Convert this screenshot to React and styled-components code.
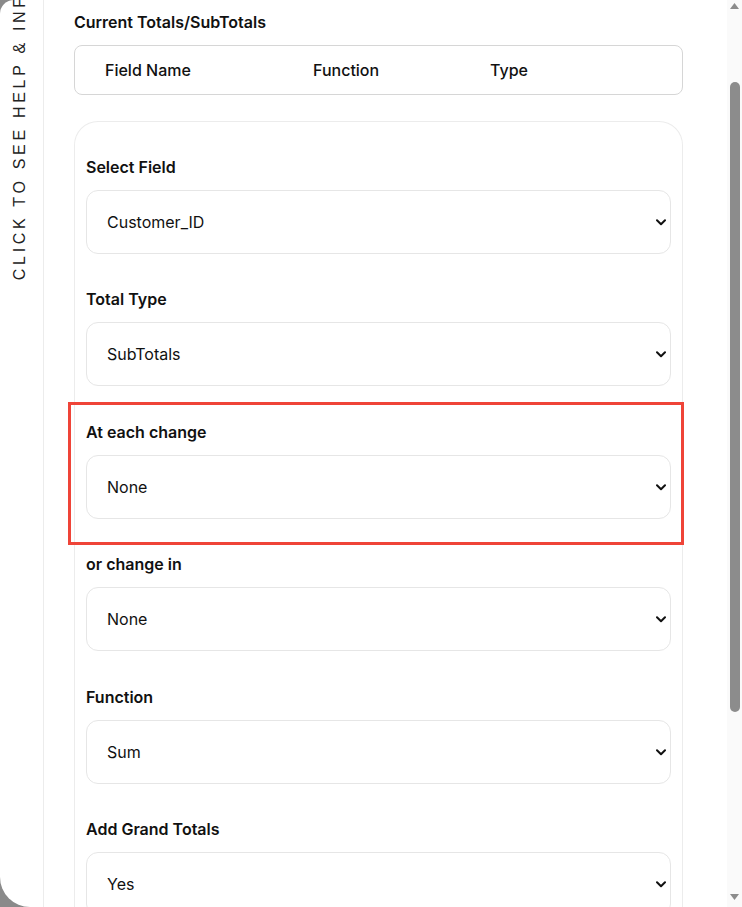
import React from 'react';
import styled, { createGlobalStyle } from 'styled-components';

const GlobalStyle = createGlobalStyle`
  html, body {
    margin: 0;
    padding: 0;
    height: 100%;
    background: #8a8a8a;
    overflow: hidden;
  }
  body {
    font-family: Inter, "Noto Sans", "Liberation Sans", sans-serif;
    color: #111;
  }
`;

const fields = [
  { label: 'Select Field', value: 'Customer_ID', options: ['Customer_ID', 'Order_ID', 'Amount'] },
  { label: 'Total Type', value: 'SubTotals', options: ['SubTotals', 'Totals'] },
  { label: 'At each change', value: 'None', options: ['None', 'Customer_ID'], highlighted: true },
  { label: 'or change in', value: 'None', options: ['None', 'Customer_ID'] },
  { label: 'Function', value: 'Sum', options: ['Sum', 'Count', 'Average'] },
  { label: 'Add Grand Totals', value: 'Yes', options: ['Yes', 'No'] },
];

const Frame = styled.div`
  display: flex;
  height: 907px;
  background: #fff;
  border-top-left-radius: 14px;
  border-bottom-left-radius: 30px;
  overflow: hidden;
`;

const HelpTab = styled.div`
  width: 44px;
  flex-shrink: 0;
  padding-right: 4px;
  box-sizing: border-box;
  border-right: 1px solid #ececec;
  display: flex;
  justify-content: center;
  align-items: flex-start;
  overflow: hidden;
`;

const HelpText = styled.span`
  writing-mode: vertical-rl;
  transform: rotate(180deg);
  margin-top: -22px;
  font-family: "Liberation Sans", Arial, sans-serif;
  font-size: 16px;
  letter-spacing: 3.7px;
  color: #222;
  white-space: nowrap;
  cursor: pointer;
`;

const Main = styled.div`
  flex: 1;
  padding: 10px 44px 0 30px;
  overflow: hidden;
`;

const Title = styled.h3`
  margin: 0 0 11px;
  font-size: 16px;
  line-height: 24px;
  font-weight: 600;
`;

const TableHead = styled.div`
  display: grid;
  grid-template-columns: 208px 177px 1fr;
  align-items: center;
  height: 48px;
  padding-left: 30px;
  border: 1px solid #d6d6d6;
  border-radius: 8px;
  font-size: 16px;
  font-weight: 500;
`;

const Card = styled.div`
  margin-top: 26px;
  padding: 33px 11px 0;
  border: 1.5px solid #ececec;
  border-bottom: none;
  border-radius: 24px 24px 0 0;
`;

const Field = styled.div`
  position: relative;
  margin-bottom: 33.4px;

  ${(p) => p.$highlighted && `
    &::after {
      content: '';
      position: absolute;
      top: -18px;
      bottom: -26px;
      left: -18px;
      right: -13px;
      border: 3px solid #ef4438;
      pointer-events: none;
    }
  `}
`;

const Label = styled.label`
  display: block;
  margin-bottom: 11px;
  font-size: 16px;
  line-height: 24px;
  font-weight: 600;
`;

const SelectWrap = styled.div`
  position: relative;
`;

const Select = styled.select`
  appearance: none;
  width: 100%;
  height: 64px;
  padding: 0 40px 0 20px;
  border: 1px solid #e6e6e6;
  border-radius: 12px;
  background: #fff;
  font-family: inherit;
  font-size: 16px;
  color: #111;
  outline: none;
`;

const Chevron = styled.svg`
  position: absolute;
  right: 5px;
  top: 50%;
  width: 10px;
  height: 7px;
  margin-top: -3px;
  pointer-events: none;
`;

const Scrollbar = styled.div`
  width: 15px;
  flex-shrink: 0;
  display: flex;
  flex-direction: column;
  align-items: center;
  background: #fafafa;
`;

const Arrow = styled.svg`
  width: 9px;
  height: 6px;
  margin: ${(p) => (p.$down ? '0 0 7px' : '3px 0 0')};
`;

const Thumb = styled.div`
  width: 10px;
  height: 630px;
  margin-top: 73px;
  border-radius: 5px;
  background: #8c8c8c;
`;

const Spacer = styled.div`
  flex: 1;
`;

export default function App() {
  return (
    <>
      <GlobalStyle />
      <Frame>
        <HelpTab>
          <HelpText>CLICK TO SEE HELP &amp; INFO</HelpText>
        </HelpTab>
        <Main>
          <Title>Current Totals/SubTotals</Title>
          <TableHead>
            <span>Field Name</span>
            <span>Function</span>
            <span>Type</span>
          </TableHead>
          <Card>
            {fields.map((f) => (
              <Field key={f.label} $highlighted={f.highlighted}>
                <Label>{f.label}</Label>
                <SelectWrap>
                  <Select defaultValue={f.value}>
                    {f.options.map((o) => (
                      <option key={o}>{o}</option>
                    ))}
                  </Select>
                  <Chevron viewBox="0 0 10 7">
                    <path d="M1 1.2l4 4 4-4" fill="none" stroke="#111" strokeWidth="2" strokeLinecap="round" strokeLinejoin="round" />
                  </Chevron>
                </SelectWrap>
              </Field>
            ))}
          </Card>
        </Main>
        <Scrollbar>
          <Arrow viewBox="0 0 9 6">
            <path d="M4.5 0L9 6H0z" fill="#8c8c8c" />
          </Arrow>
          <Thumb />
          <Spacer />
          <Arrow $down viewBox="0 0 9 6">
            <path d="M0 0h9L4.5 6z" fill="#8c8c8c" />
          </Arrow>
        </Scrollbar>
      </Frame>
    </>
  );
}
